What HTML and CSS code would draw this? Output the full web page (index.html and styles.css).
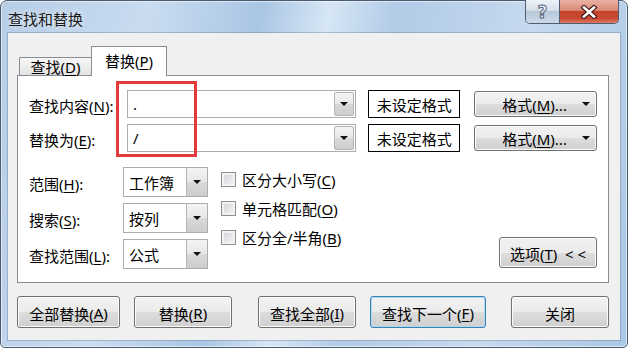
FILE: index.html
```html
<!DOCTYPE html>
<html>
<head>
    <meta charset="utf-8">
    <title>查找和替换</title>
    <link rel="stylesheet" href="styles.css">
</head>
<body>
<div class="window">
    <div class="titlebar">
        <span class="title">查找和替换</span>
        <div class="caption">
            <div class="cap-btn help">?</div>
            <div class="cap-btn close">
                <svg width="18" height="14" viewBox="0 0 18 14">
                    <path d="M4 2.5 L14 11.5 M14 2.5 L4 11.5" stroke="#4a1c18" stroke-width="5" stroke-linecap="square" fill="none"/>
                    <path d="M4 2.5 L14 11.5 M14 2.5 L4 11.5" stroke="#ffffff" stroke-width="2.6" stroke-linecap="square" fill="none"/>
                </svg>
            </div>
        </div>
    </div>

    <div class="client">
        <div class="tabs">
            <div class="tab">查找(<u>D</u>)</div>
            <div class="tab active">替换(<u>P</u>)</div>
        </div>

        <div class="panel">
            <div class="row">
                <div class="lbl">查找内容(<u>N</u>):</div>
                <div class="combo text-combo"><span class="val">.</span><span class="drop"><i class="arrow"></i></span></div>
                <div class="fmt-preview">未设定格式</div>
                <div class="btn fmt-btn">格式(<u>M</u>)...<i class="arrow"></i></div>
            </div>
            <div class="row second">
                <div class="lbl">替换为(<u>E</u>):</div>
                <div class="combo text-combo"><span class="val">/</span><span class="drop"><i class="arrow"></i></span></div>
                <div class="fmt-preview">未设定格式</div>
                <div class="btn fmt-btn">格式(<u>M</u>)...<i class="arrow"></i></div>
            </div>

            <div class="lower">
                <div class="selects">
                    <div class="srow">
                        <div class="lbl small">范围(<u>H</u>):</div>
                        <div class="combo sel"><span class="val">工作簿</span><span class="drop"><i class="arrow"></i></span></div>
                    </div>
                    <div class="srow">
                        <div class="lbl small">搜索(<u>S</u>):</div>
                        <div class="combo sel"><span class="val">按列</span><span class="drop"><i class="arrow"></i></span></div>
                    </div>
                    <div class="srow">
                        <div class="lbl small">查找范围(<u>L</u>):</div>
                        <div class="combo sel"><span class="val">公式</span><span class="drop"><i class="arrow"></i></span></div>
                    </div>
                </div>

                <div class="checks">
                    <div class="check"><span class="box"></span>区分大小写(<u>C</u>)</div>
                    <div class="check"><span class="box"></span>单元格匹配(<u>O</u>)</div>
                    <div class="check"><span class="box"></span>区分全/半角(<u>B</u>)</div>
                </div>

                <div class="btn options-btn">选项(<u>T</u>)&nbsp;&nbsp;&lt; &lt;</div>
            </div>

            <div class="red-mark"></div>
        </div>

        <div class="footer">
            <div class="btn fbtn w103">全部替换(<u>A</u>)</div>
            <div class="btn fbtn gap-s">替换(<u>R</u>)</div>
            <div class="btn fbtn gap-l">查找全部(<u>I</u>)</div>
            <div class="btn fbtn gap-s w116 default">查找下一个(<u>F</u>)</div>
            <div class="btn fbtn gap-l">关闭</div>
        </div>
    </div>
</div>
</body>
</html>
```

FILE: styles.css
```css
body {
    margin: 0;
    overflow: hidden;
    background: #ffffff;
    font-family: "Noto Sans", "Noto Sans CJK SC", sans-serif;
    font-size: 15px;
    color: #000;
}

u {
    text-decoration: underline;
    text-underline-offset: 2px;
}

/* window frame */
.window {
    width: 628px;
    height: 348px;
    box-sizing: border-box;
    border: 1px solid #4a5b70;
    border-radius: 7px 7px 5px 5px;
    background: linear-gradient(100deg, #b6cde6 0%, #c9dcf0 22%, #aac6e4 38%, #d6e6f5 48%, #b2cbe7 58%, #c6d9ee 78%, #abc7e5 100%);
    box-shadow: inset 0 0 0 1px rgba(255, 255, 255, 0.55);
    display: flex;
    flex-direction: column;
}

.titlebar {
    height: 32px;
    display: flex;
    align-items: flex-start;
}

.title {
    margin-left: 7px;
    margin-top: 9px;
    font-family: "Noto Sans CJK SC", sans-serif;
    font-size: 15px;
    line-height: 18px;
    color: #1a1a1a;
    text-shadow: 0 0 6px rgba(255, 255, 255, 0.9);
}

.caption {
    margin-left: auto;
    margin-right: 8px;
    margin-top: -1px;
    display: flex;
    height: 24px;
    box-sizing: border-box;
    border: 1px solid #4d5d72;
    border-top: none;
    border-radius: 0 0 5px 5px;
    overflow: hidden;
}

.cap-btn {
    display: flex;
    align-items: center;
    justify-content: center;
    height: 100%;
}

.help {
    width: 33px;
    border-right: 1px solid #4d5d72;
    background: linear-gradient(#eef3f8 0%, #d6dfea 45%, #b9c8d8 50%, #cbd8e6 100%);
    font-family: "DejaVu Sans", sans-serif;
    font-weight: bold;
    font-size: 17px;
    color: #eef2f7;
    -webkit-text-stroke: 1px #56667c;
}

.close {
    width: 58px;
    background: linear-gradient(#e9b2a5 0%, #d88a78 45%, #c5432d 50%, #c94a33 80%, #de7c62 100%);
}

/* client area */
.client {
    margin-left: 7px;
    width: 612px;
    height: 307px;
    background: #f0f0f0;
    box-shadow: 0 0 0 1px rgba(90, 110, 140, 0.35);
    display: flex;
    flex-direction: column;
}

.tabs {
    display: flex;
    align-items: flex-end;
    margin-top: 13px;
    padding-left: 11px;
    height: 29px;
    position: relative;
    z-index: 1;
}

.tab {
    box-sizing: border-box;
    height: 18px;
    width: 72px;
    border: 1px solid #898c95;
    border-bottom: none;
    border-right: none;
    background: linear-gradient(#f6f6f6, #e4e4e4);
    display: flex;
    align-items: center;
    justify-content: center;
    line-height: 16px;
}

.tab.active {
    height: 30px;
    width: 76px;
    margin-bottom: -1px;
    border-right: 1px solid #898c95;
    background: #ffffff;
    padding-bottom: 2px;
}

.panel {
    position: relative;
    margin-left: 9px;
    width: 592px;
    height: 208px;
    box-sizing: border-box;
    border: 1px solid #898c95;
    background: #ffffff;
    padding: 14px 11px 0 11px;
    line-height: 18px;
}

.row {
    display: flex;
    align-items: center;
    height: 28px;
}

.row.second {
    margin-top: 6px;
}

.lbl {
    width: 98px;
    flex-shrink: 0;
    padding-top: 3px;
}

.lbl.small {
    width: 94px;
}

.combo {
    box-sizing: border-box;
    border: 1px solid #abadb3;
    background: #ffffff;
    display: flex;
    align-items: center;
}

.combo .val {
    flex: 1;
    padding-left: 5px;
    padding-top: 2px;
}

.drop {
    align-self: stretch;
    width: 20px;
    box-sizing: border-box;
    border: 1px solid #b5b5b5;
    border-radius: 2px;
    margin: 1px;
    background: linear-gradient(#f3f3f3 0%, #e8e8e8 50%, #d9d9d9 51%, #cdcdcd 100%);
    display: flex;
    align-items: center;
    justify-content: center;
}

.arrow {
    width: 0;
    height: 0;
    border-left: 4px solid transparent;
    border-right: 4px solid transparent;
    border-top: 4px solid #111;
}

.text-combo {
    width: 230px;
    height: 28px;
}

.text-combo .val {
    align-self: flex-start;
    padding-top: 4px;
}

.fmt-preview {
    margin-left: 12px;
    width: 92px;
    height: 28px;
    box-sizing: border-box;
    border: 1px solid #000;
    display: flex;
    align-items: center;
    justify-content: center;
    padding-top: 2px;
}

.btn {
    box-sizing: border-box;
    border: 1px solid #707070;
    border-radius: 3px;
    background: linear-gradient(#f2f2f2 0%, #ebebeb 50%, #dddddd 51%, #cfcfcf 100%);
    box-shadow: inset 0 0 0 1px #fbfbfb;
    display: flex;
    align-items: center;
    justify-content: center;
    padding-top: 2px;
    white-space: nowrap;
}

.fmt-btn {
    margin-left: 14px;
    width: 123px;
    height: 26px;
    justify-content: flex-start;
    padding-left: 27px;
    padding-right: 6px;
}

.fmt-btn .arrow {
    margin-left: auto;
    margin-top: -2px;
}

.lower {
    display: flex;
    margin-top: 15px;
    height: 102px;
}

.selects {
    display: flex;
    flex-direction: column;
    gap: 6px;
}

.srow {
    display: flex;
    align-items: center;
    height: 30px;
}

.sel {
    width: 85px;
    height: 30px;
}

.sel .drop {
    margin: 0;
    border-top: none;
    border-bottom: none;
    border-right: none;
    border-radius: 0;
    width: 21px;
}

.checks {
    margin-left: 13px;
    padding-top: 5px;
    display: flex;
    flex-direction: column;
    gap: 14px;
}

.check {
    display: flex;
    align-items: center;
    height: 15px;
    white-space: nowrap;
}

.box {
    width: 15px;
    height: 15px;
    box-sizing: border-box;
    border: 1px solid #8e8f8f;
    background: linear-gradient(135deg, #cfd2d7, #f7f7f7);
    box-shadow: inset 0 0 0 2px #f2f2f2;
    margin-right: 6px;
    flex-shrink: 0;
}

.options-btn {
    margin-left: auto;
    align-self: flex-end;
    margin-bottom: 1px;
    width: 98px;
    height: 31px;
}

/* annotation drawn over the inputs */
.red-mark {
    position: absolute;
    left: 98px;
    top: 5px;
    width: 81px;
    height: 76px;
    box-sizing: border-box;
    border: 3px solid #e33b3b;
}

.footer {
    display: flex;
    margin-top: 13px;
    padding-left: 9px;
}

.fbtn {
    width: 98px;
    height: 32px;
}

.w103 {
    width: 103px;
}

.w116 {
    width: 116px;
}

.gap-s {
    margin-left: 14px;
}

.gap-l {
    margin-left: 26px;
}

.fbtn.gap-l:last-child {
    margin-left: 25px;
}

.default {
    border-color: #3c7fb1;
    box-shadow: inset 0 0 0 1px #a6dcf6;
}
```
